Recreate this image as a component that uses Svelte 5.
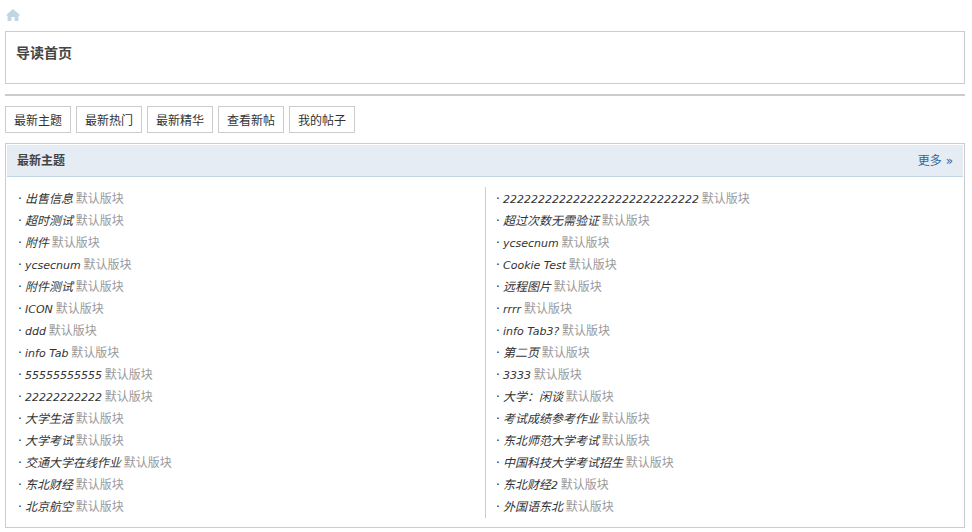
<script>
  const left = ['出售信息','超时测试','附件','ycsecnum','附件测试','ICON','ddd','info Tab','55555555555','22222222222','大学生活','大学考试','交通大学在线作业','东北财经','北京航空'];
  const right = ['2222222222222222222222222222','超过次数无需验证','ycsecnum','Cookie Test','远程图片','rrrr','info Tab3?','第二页','3333','大学：闲谈','考试成绩参考作业','东北师范大学考试','中国科技大学考试招生','东北财经2','外国语东北'];
  const tabs = ['最新主题','最新热门','最新精华','查看新帖','我的帖子'];
  const columns = [left, right];
  const runs = (s) => s.split(/([\x00-\x7f]+)/).filter(Boolean).map((text) => ({ text, latin: /^[\x00-\x7f]/.test(text) }));
</script>

<div class="page">
  <div class="crumb">
    <svg width="16" height="14" viewBox="0 0 16 14" aria-label="首页">
      <path d="M8 1 L15.5 7.6 H13.4 V13 H9.6 V9 H6.4 V13 H2.6 V7.6 H0.5 Z" fill="#c2d5e3" />
    </svg>
  </div>

  <div class="intro"><h1>导读首页</h1></div>

  <div class="tabs">
    {#each tabs as t}<a class="tab" href="#top">{t}</a>{/each}
  </div>

  <section class="panel">
    <header>
      <h2>最新主题</h2>
      <a class="more" href="#top">更多<span class="raquo">»</span></a>
    </header>
    <div class="cols">
      {#each columns as col}
        <ul>
          {#each col as item}
            <li><span class="dot">·</span><em>{#each runs(item) as r}<span class:latin={r.latin}>{r.text}</span>{/each}</em> <span class="forum">默认版块</span></li>
          {/each}
        </ul>
      {/each}
    </div>
  </section>
</div>

<style>
  :global(body) {
    margin: 0;
    background: #fff;
    font-family: "DejaVu Sans", "Noto Sans CJK SC", sans-serif;
    font-size: 12px;
    color: #444;
  }
  .page {
    width: 960px;
    padding: 0 0 0 5px;
  }
  .crumb {
    height: 31px;
    box-sizing: border-box;
    padding: 8px 0 0 0;
    line-height: 0;
  }
  .intro {
    height: 53px;
    box-sizing: border-box;
    border: 1px solid #ccc;
    padding: 12px 10px 0;
  }
  h1 {
    margin: 0;
    font-size: 14px;
    line-height: 19px;
    font-weight: 700;
    color: #444;
  }
  .tabs {
    margin-top: 10px;
    border-top: 2px solid #ccc;
    padding-top: 10px;
    display: flex;
    gap: 5px;
  }
  .tab {
    box-sizing: border-box;
    width: 66px;
    height: 27px;
    border: 1px solid #ccc;
    line-height: 27px;
    padding-top: 1px;
    text-align: center;
    color: #333;
    text-decoration: none;
  }
  .panel {
    margin-top: 10px;
    height: 385px;
    box-sizing: border-box;
    border: 1px solid #ccc;
    padding: 1px;
  }
  header {
    height: 32px;
    box-sizing: border-box;
    background: #e5ecf3;
    border-bottom: 1px solid #c2d5e3;
    display: flex;
    justify-content: space-between;
    align-items: center;
    padding: 0 10px 3px;
  }
  h2 {
    margin: 0;
    font-size: 12px;
    font-weight: 700;
    color: #444;
  }
  .more {
    color: #369;
    text-decoration: none;
  }
  .raquo {
    margin-left: 4px;
    font-size: 12px;
  }
  .cols {
    display: grid;
    grid-template-columns: 478px 1fr;
    padding-top: 10px;
    height: 330px;
  }
  ul {
    list-style: none;
    margin: 0;
    padding: 1px 0 0 10px;
  }
  ul + ul {
    border-left: 1px solid #ccc;
    padding-left: 9px;
  }
  li {
    height: 22px;
    line-height: 22px;
    white-space: pre-wrap;
  }
  .dot {
    display: inline-block;
    width: 8px;
    color: #222;
    text-indent: 1px;
  }
  em {
    color: #333;
    font-style: italic;
  }
  .latin {
    font-size: 11px;
  }
  .forum {
    color: #999;
    margin-left: -1px;
  }
</style>
